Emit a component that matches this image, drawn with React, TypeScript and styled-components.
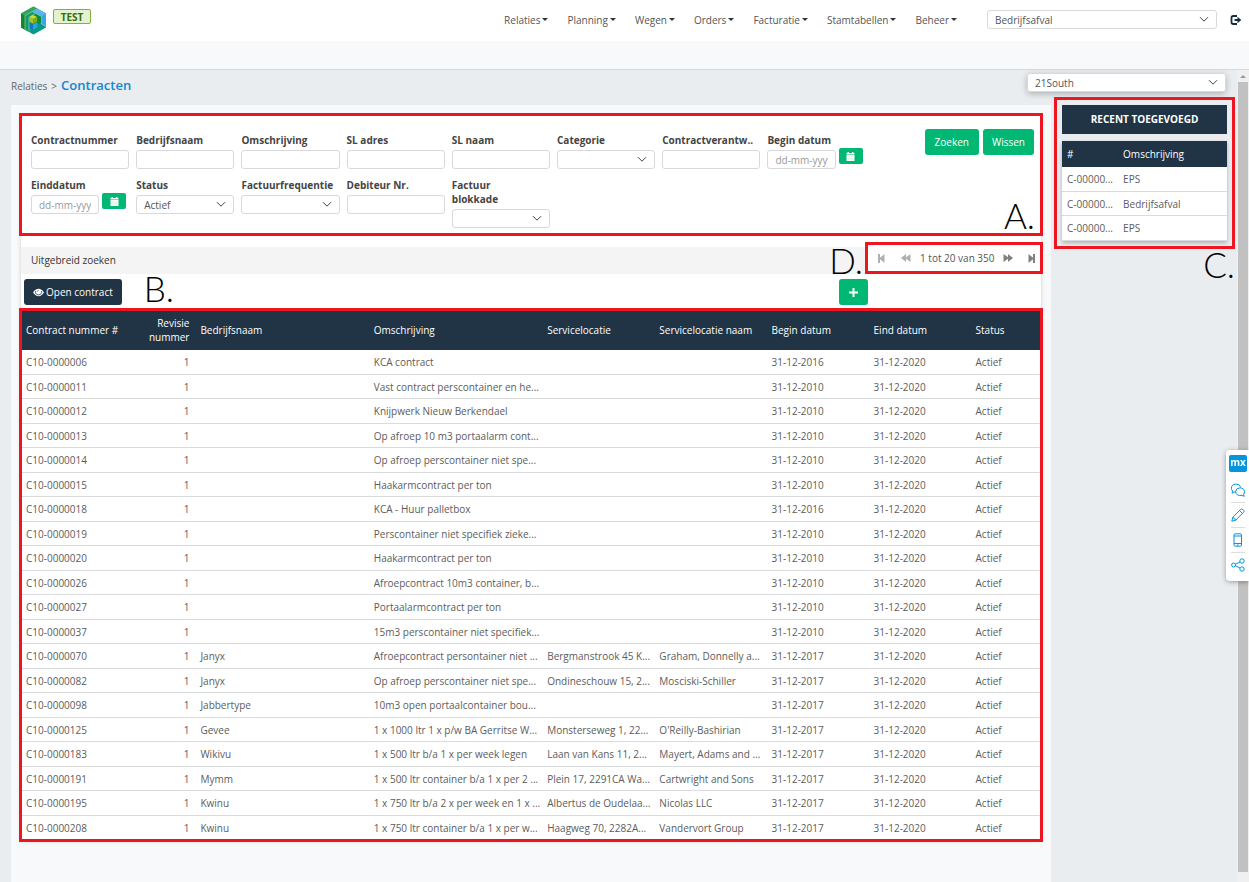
import React, { useId } from "react";
import styled, { createGlobalStyle, css } from "styled-components";

const NAVY = "#203445";
const GREEN = "#00b773";
const RED = "#ed1520";
const BLUE = "#0f87d1";

const GlobalStyle = createGlobalStyle`
  *, *::before, *::after { box-sizing: border-box; }
  body {
    margin: 0;
    background: #e9edf0;
    color: #555;
    font: 10px/14px "Open Sans", "Noto Sans", sans-serif;
  }
  button, input, select { font: inherit; color: inherit; margin: 0; }
  a { color: inherit; text-decoration: none; }
`;

const Page = styled.div`
  min-height: 100vh;
  display: flex;
  flex-direction: column;
`;

const Header = styled.header`
  height: 41px;
  display: flex;
  align-items: center;
  padding: 0 7px 2px 20px;
  background: #fff;
`;

const Brand = styled.div`
  display: flex;
  align-items: flex-start;
  gap: 6px;
  flex: 1;
  padding-top: 2px;
`;

const EnvBadge = styled.span`
  margin-top: 3px;
  width: 38px;
  height: 15px;
  border: 1px solid #7fb23a;
  border-radius: 2px;
  background: #e3f3cd;
  color: #386b0b;
  font-weight: 700;
  line-height: 14px;
  text-align: center;
`;

const Nav = styled.nav`
  display: flex;
  gap: 19px;
  margin-right: 30px;
`;

const NavLink = styled.a`
  display: flex;
  align-items: center;
  gap: 2px;
  &::after {
    content: "";
    border: 3px solid transparent;
    border-top-color: #333;
    border-bottom: 0;
  }
`;

const fieldBox = css`
  width: 100%;
  height: 19px;
  border: 1px solid #d7d9db;
  border-radius: 3px;
  background: #fff;
  padding: 0 7px;
`;

const TextInput = styled.input`
  ${fieldBox}
  min-width: 0;
  &::placeholder { color: #999; opacity: 1; }
`;

const SelectFrame = styled.div<{ $raised?: boolean }>`
  position: relative;
  width: 100%;
  border-radius: 3px;
  box-shadow: ${(p) => (p.$raised ? "0 2px 6px rgba(0,0,0,.25)" : "none")};
  svg {
    position: absolute;
    right: 8px;
    top: 6px;
    pointer-events: none;
  }
`;

const NativeSelect = styled.select`
  ${fieldBox}
  display: block;
  appearance: none;
`;

const HeaderSelect = styled.div`
  width: 230px;
  margin-right: 13px;
`;

const LogoutButton = styled.button`
  display: flex;
  border: 0;
  padding: 0;
  background: none;
`;

const SubBar = styled.div`
  height: 29px;
  background: #f8f9fb;
  border-bottom: 1px solid #d5d9dc;
`;

const Body = styled.div`
  flex: 1;
  display: flex;
`;

const Content = styled.main`
  flex: 1;
  min-width: 0;
  display: flex;
  flex-direction: column;
`;

const TitleRow = styled.div`
  height: 35px;
  display: flex;
  justify-content: space-between;
  align-items: flex-start;
  padding: 3px 11px 0 11px;
`;

const Breadcrumb = styled.div`
  display: flex;
  align-items: baseline;
  gap: 4px;
  margin-top: 4px;
  color: #666;
  h1 {
    margin: 0;
    font-size: 13px;
    font-weight: 600;
    line-height: 16px;
    color: ${BLUE};
  }
`;

const TitleSelect = styled.div`
  width: 199px;
`;

const Columns = styled.div`
  flex: 1;
  display: flex;
`;

const Panel = styled.section`
  flex: 1;
  min-width: 0;
  margin-left: 11px;
  padding: 10px 10px 40px;
  background: #f8f9fb;
`;

const Card = styled.div`
  background: #fff;
  box-shadow: 0 1px 4px rgba(0, 0, 0, 0.18);
`;

const Framed = styled.div<{ $gap: number }>`
  position: relative;
  &::after {
    content: "";
    position: absolute;
    inset: -${(p) => p.$gap}px;
    border: 3px solid ${RED};
    pointer-events: none;
  }
`;

const Marker = styled.span<{ $right: number; $bottom: number }>`
  position: absolute;
  right: ${(p) => p.$right}px;
  bottom: ${(p) => p.$bottom}px;
  color: #000;
  font: 300 35px/34px Lato, sans-serif;
  pointer-events: none;
`;

const SearchForm = styled.form`
  display: flex;
  align-items: flex-start;
  gap: 59px;
  min-height: 119px;
  padding: 18px 7px 6px 10px;
`;

const FieldGrid = styled.div`
  flex: 1;
  display: grid;
  grid-template-columns: repeat(8, minmax(0, 1fr));
  gap: 9px 7px;
  align-items: start;
`;

const FieldLabel = styled.label`
  display: block;
  margin-bottom: 3px;
  color: #444;
  font-weight: 700;
  line-height: 14px;
  white-space: pre-line;
`;

const DateRow = styled.div`
  display: flex;
  align-items: flex-start;
  gap: 3px;
`;

const DateButton = styled.button`
  flex: none;
  width: 24px;
  height: 16px;
  margin-top: -2px;
  margin-right: 3px;
  display: flex;
  align-items: center;
  justify-content: center;
  border: 0;
  border-radius: 2px;
  background: ${GREEN};
`;

const Actions = styled.div`
  display: flex;
  gap: 4px;
  margin-top: -4px;
`;

const Button = styled.button<{ $tone: string; $pad: number }>`
  height: 26px;
  display: flex;
  align-items: center;
  gap: 2px;
  padding: 0 ${(p) => p.$pad}px;
  border: 0;
  border-radius: 3px;
  background: ${(p) => p.$tone};
  color: #fff;
`;

const SearchBar = styled.div`
  display: flex;
  height: 27px;
  margin-top: 13px;
  background: #f4f4f4;
`;

const ExpandLink = styled.a`
  flex: 1;
  padding-left: 10px;
  line-height: 26px;
  color: #333;
`;

const Pager = styled(Framed)`
  width: 172px;
  height: 26px;
  margin-top: -2px;
  margin-right: 1px;
  padding: 0 5px 0 10px;
  display: grid;
  grid-template-columns: 23px 19px 1fr 25px 7px;
  align-items: center;
  background: #fff;
`;

const PagerButton = styled.button<{ $off?: boolean }>`
  display: flex;
  padding: 0;
  border: 0;
  background: none;
  color: ${(p) => (p.$off ? "#b0b0b0" : "#808080")};
`;

const Tools = styled.div`
  position: relative;
  display: flex;
  justify-content: space-between;
  height: 36px;
  padding: 5px 173px 0 3px;
`;

const Table = styled.table`
  width: 100%;
  table-layout: fixed;
  border-collapse: separate;
  border-spacing: 0;
  background: #fff;
  th, td {
    padding: 0 2px 0 5px;
    text-align: left;
    overflow: hidden;
    white-space: nowrap;
    text-overflow: ellipsis;
  }
  th {
    background: ${NAVY};
    color: #fff;
    font-weight: 400;
  }
  td {
    height: 24px;
    border-bottom: 1px solid #d9dbdd;
    color: #5c5c5c;
  }
  tbody tr:nth-child(odd) td { height: 25px; }
`;

const ContractTable = styled(Table)`
  th, td { padding: 0 1px 0 6px; }
  th:first-child, td:first-child { padding-left: 5px; }
  th { height: 40px; }
  th:nth-child(2), td:nth-child(2) {
    padding-right: 5px;
    text-align: right;
    white-space: normal;
  }
`;

const Col = styled.col<{ $w: number }>`
  width: ${(p) => p.$w}%;
`;

const Aside = styled.aside`
  width: 186px;
  padding: 0 10px 0 11px;
`;

const AsideTitle = styled.h2`
  margin: 0 0 7px;
  background: ${NAVY};
  color: #fff;
  font-size: 10px;
  line-height: 29px;
  text-align: center;
`;

const RecentTable = styled(Table)`
  box-shadow: 0 2px 4px rgba(0, 0, 0, 0.25);
  th { height: 26px; }
`;

const ScrollTrack = styled.div`
  width: 12px;
  padding: 12px 1px 0;
  background: #f0f0f1;
  position: relative;
  &::before {
    content: "";
    position: absolute;
    left: 3px;
    top: 5px;
    border: 3px solid transparent;
    border-bottom-color: #999;
    border-top: 0;
  }
`;

const ScrollThumb = styled.div`
  height: calc(100% - 10px);
  background: #c1c1c1;
`;

const FeedbackBar = styled.div`
  position: fixed;
  right: 0;
  top: 450px;
  width: 23px;
  padding: 5px 2px 4px 3px;
  display: flex;
  flex-direction: column;
  align-items: center;
  border-radius: 4px 0 0 4px;
  background: #fff;
  box-shadow: 0 1px 5px rgba(0, 0, 0, 0.35);
`;

const MxTile = styled.span`
  width: 18px;
  height: 17px;
  margin-bottom: 5px;
  border-radius: 2px;
  background: #0595db;
  color: #fff;
  font-weight: 700;
  line-height: 15px;
  text-align: center;
`;

const FeedbackButton = styled.button`
  width: 14px;
  height: 25px;
  display: flex;
  align-items: center;
  justify-content: center;
  padding: 0;
  border: 0;
  background: none;
  & + & { border-top: 1px solid #ddd; }
  svg { flex: none; }
`;

const Chevron = () => (
  <svg width="10" height="7" viewBox="0 0 10 7" fill="none" stroke="#444">
    <path d="M1 1.2 5 5.2 9 1.2" />
  </svg>
);

const Logo = () => (
  <svg width="27" height="29" viewBox="0 0 27 29">
    <path d="M13.5.5 26 7.500v14L13.500 28.500 1 21.500v-14z" fill="#079a86" />
    <path d="M1 7.500 5 9.700v14L1 21.500z" fill="#12872f" />
    <path d="M1 7.500 13.500.5l4 2.300L5 9.700z" fill="#35a556" />
    <path d="M12 5.600 17.500 2.800 26 7.500v13l-4.500-2.500v-7.500z" fill="#3aa6e0" />
    <path d="M13.500.5 17.500 2.800 26 7.500 22 10 12.500 4.800 17 2.500z" fill="#5bb5e8" />
    <path d="M5 9.700 12 5.800 15.500 7.600 9 11.200v14.700l-4-2.200z" fill="#17986a" />
    <path d="M15.500 7.600 21.500 11v5.500L17.500 18.500V12L12 9.500z" fill="#0b8a3a" />
    <path d="M9 16.500 13 18.700v5L9 21.500z" fill="#0b78c6" />
    <path d="M13 18.700 17.500 16.200v5L13 23.700z" fill="#2f9fe0" />
    <path d="M9.500 11 13 9l4 2-3.700 2z" fill="#d2dc2a" />
    <path d="M9.500 11 13.300 13v4.700L9.500 15.600z" fill="#a9c41a" />
    <path d="M13.300 13 17 11v4.600l-3.700 2.100z" fill="#8aa90c" />
    <path
      d="M5 23.700v-14L12.500 5.500 21.500 10.500V18l4.500 2.500M9 25.500V11.200l6.500-3.600"
      fill="none"
      stroke="#c4e6dc"
      strokeWidth=".5"
    />
  </svg>
);

const LogoutIcon = () => (
  <svg width="12" height="12" viewBox="0 0 12 12" fill="none">
    <path d="M7 2H3.200Q1.500 2 1.500 3.700v4.600Q1.500 10 3.200 10H7" stroke="#142c40" strokeWidth="1.800" />
    <path d="M4.500 4.900h3V2.800L11.300 6 7.500 9.200V7.100h-3z" fill="#142c40" />
  </svg>
);

const CalendarIcon = () => (
  <svg width="9" height="9" viewBox="0 0 9 9" fill="#fff">
    <path d="M0.500 1h1V0h1.500v1h3V0h1.500v1h1v1.500h-8zM.5 3h8v6h-8z" />
    <path d="M2 5h5M2 7h5" stroke="#9fdfc6" strokeWidth=".5" />
  </svg>
);

const EyeIcon = () => (
  <svg width="11" height="9" viewBox="0 0 11 9">
    <path d="M0 4.500Q2.500.8 5.500.8T11 4.500Q8.500 8.200 5.500 8.200T0 4.500z" fill="#fff" />
    <path d="M2.800 3Q1.500 4.800 3.500 6.300 5.500 7.600 7.500 6.300 9.500 4.800 8.200 3" fill="none" stroke={NAVY} strokeWidth=".8" />
    <path d="M4.400 3.600Q4.600 2.600 5.600 2.500" fill="none" stroke={NAVY} strokeWidth=".7" />
  </svg>
);

const PlusIcon = () => (
  <svg width="9" height="9" viewBox="0 0 9 9" stroke="#fff" strokeWidth="2">
    <path d="M4.500 0v9M0 4.500h9" />
  </svg>
);

const StepIcon = ({ flip }: { flip?: boolean }) => (
  <svg width="7" height="9" viewBox="0 0 7 9" fill="currentColor">
    <path d={flip ? "M7 0H5v3.800L.5 0v9L5 5.200V9h2z" : "M0 0h2v3.800L6.500 0v9L2 5.200V9H0z"} />
  </svg>
);

const DoubleIcon = ({ flip }: { flip?: boolean }) => (
  <svg width="10" height="10" viewBox="0 0 10 10" fill="currentColor">
    <path d={flip ? "M.5 1 5 4.300V1l5 4-5 4V5.700L.5 9z" : "M9.500 1 5 4.300V1L0 5l5 4V5.700L9.500 9z"} />
  </svg>
);

const lineIcon = { width: 14, height: 14, viewBox: "0 0 14 14", fill: "none", stroke: "#0595db" };

const ChatIcon = () => (
  <svg {...lineIcon}>
    <path d="M5 8.800 3 9l-2 1.200.6-2.100Q.4 6.800.4 5.200.6 1.300 5 1q4 .2 4.600 3" />
    <path d="M9 4.800q4.300.2 4.500 3.900 0 1.400-.9 2.400l.6 2.200-2.300-.9q-5.700.9-6.300-3.700Q4.900 5 9 4.800z" />
  </svg>
);

const PencilIcon = () => (
  <svg {...lineIcon}>
    <path d="M.8 13.200 1.800 9.300 9.900 1.200q.8-.8 1.600 0l1.300 1.300q.8.800 0 1.600L4.700 12.200zM8.600 2.500l2.900 2.900M1.800 9.300q1.300 0 1.300 1.500 1.600-.1 1.600 1.400" />
  </svg>
);

const PhoneIcon = () => (
  <svg {...lineIcon}>
    <rect x="3" y=".8" width="7.500" height="12.400" rx="1.200" />
    <path d="M3 3h7.500M3 10.500h7.500M6 12h1.500" />
  </svg>
);

const ShareIcon = () => (
  <svg {...lineIcon}>
    <circle cx="2.600" cy="7" r="2" />
    <circle cx="11" cy="3" r="2.200" />
    <circle cx="11" cy="11" r="2.200" />
    <path d="M4.500 6.200 9 4M4.500 7.800 9 10" />
  </svg>
);

function Select({ id, label, options, raised }: { id?: string; label?: string; options: string[]; raised?: boolean }) {
  return (
    <SelectFrame $raised={raised}>
      <NativeSelect id={id} aria-label={label}>
        {options.map((o) => (
          <option key={o}>{o}</option>
        ))}
      </NativeSelect>
      <Chevron />
    </SelectFrame>
  );
}

type Kind = "text" | "select" | "date";

function Field({ label, kind, value = "" }: { label: string; kind: Kind; value?: string }) {
  const id = useId();
  return (
    <div>
      <FieldLabel htmlFor={id}>{label}</FieldLabel>
      {kind === "text" && <TextInput id={id} type="text" />}
      {kind === "select" && <Select id={id} options={[value]} />}
      {kind === "date" && (
        <DateRow>
          <TextInput id={id} type="text" placeholder="dd-mm-yyyy" />
          <DateButton type="button" aria-label={`${label} kiezen`}>
            <CalendarIcon />
          </DateButton>
        </DateRow>
      )}
    </div>
  );
}

const fields: { label: string; kind: Kind; value?: string }[] = [
  { label: "Contractnummer", kind: "text" },
  { label: "Bedrijfsnaam", kind: "text" },
  { label: "Omschrijving", kind: "text" },
  { label: "SL adres", kind: "text" },
  { label: "SL naam", kind: "text" },
  { label: "Categorie", kind: "select" },
  { label: "Contractverantw..", kind: "text" },
  { label: "Begin datum", kind: "date" },
  { label: "Einddatum", kind: "date" },
  { label: "Status", kind: "select", value: "Actief" },
  { label: "Factuurfrequentie", kind: "select" },
  { label: "Debiteur Nr.", kind: "text" },
  { label: "Factuur\nblokkade", kind: "select" },
];

const menu = ["Relaties", "Planning", "Wegen", "Orders", "Facturatie", "Stamtabellen", "Beheer"];

const columns: [string, number][] = [
  ["Contract nummer #", 10],
  ["Revisie nummer", 7],
  ["Bedrijfsnaam", 17],
  ["Omschrijving", 17],
  ["Servicelocatie", 11],
  ["Servicelocatie naam", 11],
  ["Begin datum", 10],
  ["Eind datum", 10],
  ["Status", 7],
];

/* number, company, description, location, location name, start year */
const contracts: string[][] = [
  ["0006", "", "KCA contract", "", "", "2016"],
  ["0011", "", "Vast contract perscontainer en he...", "", "", "2010"],
  ["0012", "", "Knijpwerk Nieuw Berkendael", "", "", "2010"],
  ["0013", "", "Op afroep 10 m3 portaalarm cont...", "", "", "2010"],
  ["0014", "", "Op afroep perscontainer niet spe...", "", "", "2010"],
  ["0015", "", "Haakarmcontract per ton", "", "", "2010"],
  ["0018", "", "KCA - Huur palletbox", "", "", "2016"],
  ["0019", "", "Perscontainer niet specifiek zieke...", "", "", "2010"],
  ["0020", "", "Haakarmcontract per ton", "", "", "2010"],
  ["0026", "", "Afroepcontract 10m3 container, b...", "", "", "2010"],
  ["0027", "", "Portaalarmcontract per ton", "", "", "2010"],
  ["0037", "", "15m3 perscontainer niet specifiek...", "", "", "2010"],
  ["0070", "Janyx", "Afroepcontract persontainer niet ...", "Bergmanstrook 45 K...", "Graham, Donnelly a...", "2017"],
  ["0082", "Janyx", "Op afroep perscontainer niet spe...", "Ondineschouw 15, 2...", "Mosciski-Schiller", "2017"],
  ["0098", "Jabbertype", "10m3 open portaalcontainer bou...", "", "", "2017"],
  ["0125", "Gevee", "1 x 1000 ltr 1 x p/w BA Gerritse W...", "Monsterseweg 1, 22...", "O'Reilly-Bashirian", "2017"],
  ["0183", "Wikivu", "1 x 500 ltr b/a 1 x per week legen", "Laan van Kans 11, 2...", "Mayert, Adams and ...", "2017"],
  ["0191", "Mymm", "1 x 500 ltr container b/a 1 x per 2 ...", "Plein 17, 2291CA Wa...", "Cartwright and Sons", "2017"],
  ["0195", "Kwinu", "1 x 750 ltr b/a 2 x per week en 1 x ...", "Albertus de Oudelaa...", "Nicolas LLC", "2017"],
  ["0208", "Kwinu", "1 x 750 ltr container b/a 1 x per w...", "Haagweg 70, 2282A...", "Vandervort Group", "2017"],
];

export default function App() {
  return (
    <Page>
      <GlobalStyle />
      <Header>
        <Brand>
          <Logo />
          <EnvBadge>TEST</EnvBadge>
        </Brand>
        <Nav>
          {menu.map((m) => (
            <NavLink href="#" key={m}>
              {m}
            </NavLink>
          ))}
        </Nav>
        <HeaderSelect>
          <Select label="Afdeling" options={["Bedrijfsafval"]} />
        </HeaderSelect>
        <LogoutButton aria-label="Uitloggen">
          <LogoutIcon />
        </LogoutButton>
      </Header>
      <SubBar />
      <Body>
        <Content>
          <TitleRow>
            <Breadcrumb>
              <a href="#">Relaties</a>
              <span>&gt;</span>
              <h1>Contracten</h1>
            </Breadcrumb>
            <TitleSelect>
              <Select label="Organisatie" options={["21South"]} raised />
            </TitleSelect>
          </TitleRow>
          <Columns>
            <Panel>
              <Card>
                <Framed $gap={2}>
                  <SearchForm onSubmit={(e) => e.preventDefault()}>
                    <FieldGrid>
                      {fields.map((f) => (
                        <Field key={f.label} {...f} />
                      ))}
                    </FieldGrid>
                    <Actions>
                      <Button type="submit" $tone={GREEN} $pad={10}>
                        Zoeken
                      </Button>
                      <Button type="reset" $tone={GREEN} $pad={9}>
                        Wissen
                      </Button>
                    </Actions>
                  </SearchForm>
                  <Marker $right={6} $bottom={2}>A.</Marker>
                </Framed>
                <SearchBar>
                  <ExpandLink href="#">Uitgebreid zoeken</ExpandLink>
                  <Pager $gap={3}>
                    <PagerButton $off aria-label="Eerste">
                      <StepIcon />
                    </PagerButton>
                    <PagerButton $off aria-label="Vorige">
                      <DoubleIcon />
                    </PagerButton>
                    <span>1 tot 20 van 350</span>
                    <PagerButton aria-label="Volgende">
                      <DoubleIcon flip />
                    </PagerButton>
                    <PagerButton aria-label="Laatste">
                      <StepIcon flip />
                    </PagerButton>
                  </Pager>
                </SearchBar>
                <Tools>
                  <Button $tone={NAVY} $pad={9}>
                    <EyeIcon />
                    Open contract
                  </Button>
                  <Button $tone={GREEN} $pad={10} aria-label="Nieuw contract">
                    <PlusIcon />
                  </Button>
                  <Marker $right={867} $bottom={5}>B.</Marker>
                  <Marker $right={178} $bottom={33}>D.</Marker>
                </Tools>
                <Framed $gap={2}>
                  <ContractTable>
                    <colgroup>
                      {columns.map(([name, w]) => (
                        <Col key={name} $w={w} />
                      ))}
                    </colgroup>
                    <thead>
                      <tr>
                        {columns.map(([name]) => (
                          <th key={name} scope="col">
                            {name}
                          </th>
                        ))}
                      </tr>
                    </thead>
                    <tbody>
                      {contracts.map(([nr, company, text, place, placeName, year]) => (
                        <tr key={nr}>
                          <td>C10-000{nr}</td>
                          <td>1</td>
                          <td>{company}</td>
                          <td>{text}</td>
                          <td>{place}</td>
                          <td>{placeName}</td>
                          <td>31-12-{year}</td>
                          <td>31-12-2020</td>
                          <td>Actief</td>
                        </tr>
                      ))}
                    </tbody>
                  </ContractTable>
                </Framed>
              </Card>
            </Panel>
            <Aside>
              <Framed $gap={8}>
                <AsideTitle>RECENT TOEGEVOEGD</AsideTitle>
                <RecentTable>
                  <colgroup>
                    <Col $w={34} />
                    <Col $w={66} />
                  </colgroup>
                  <thead>
                    <tr>
                      <th scope="col">#</th>
                      <th scope="col">Omschrijving</th>
                    </tr>
                  </thead>
                  <tbody>
                    {["EPS", "Bedrijfsafval", "EPS"].map((t, i) => (
                      <tr key={i}>
                        <td>C-00000...</td>
                        <td>{t}</td>
                      </tr>
                    ))}
                  </tbody>
                </RecentTable>
                <Marker $right={-8} $bottom={-40}>C.</Marker>
              </Framed>
            </Aside>
          </Columns>
        </Content>
        <ScrollTrack>
          <ScrollThumb />
        </ScrollTrack>
      </Body>
      <FeedbackBar>
        <MxTile>mx</MxTile>
        <FeedbackButton aria-label="Feedback">
          <ChatIcon />
        </FeedbackButton>
        <FeedbackButton aria-label="Bewerken">
          <PencilIcon />
        </FeedbackButton>
        <FeedbackButton aria-label="Mobiel">
          <PhoneIcon />
        </FeedbackButton>
        <FeedbackButton aria-label="Delen">
          <ShareIcon />
        </FeedbackButton>
      </FeedbackBar>
    </Page>
  );
}
